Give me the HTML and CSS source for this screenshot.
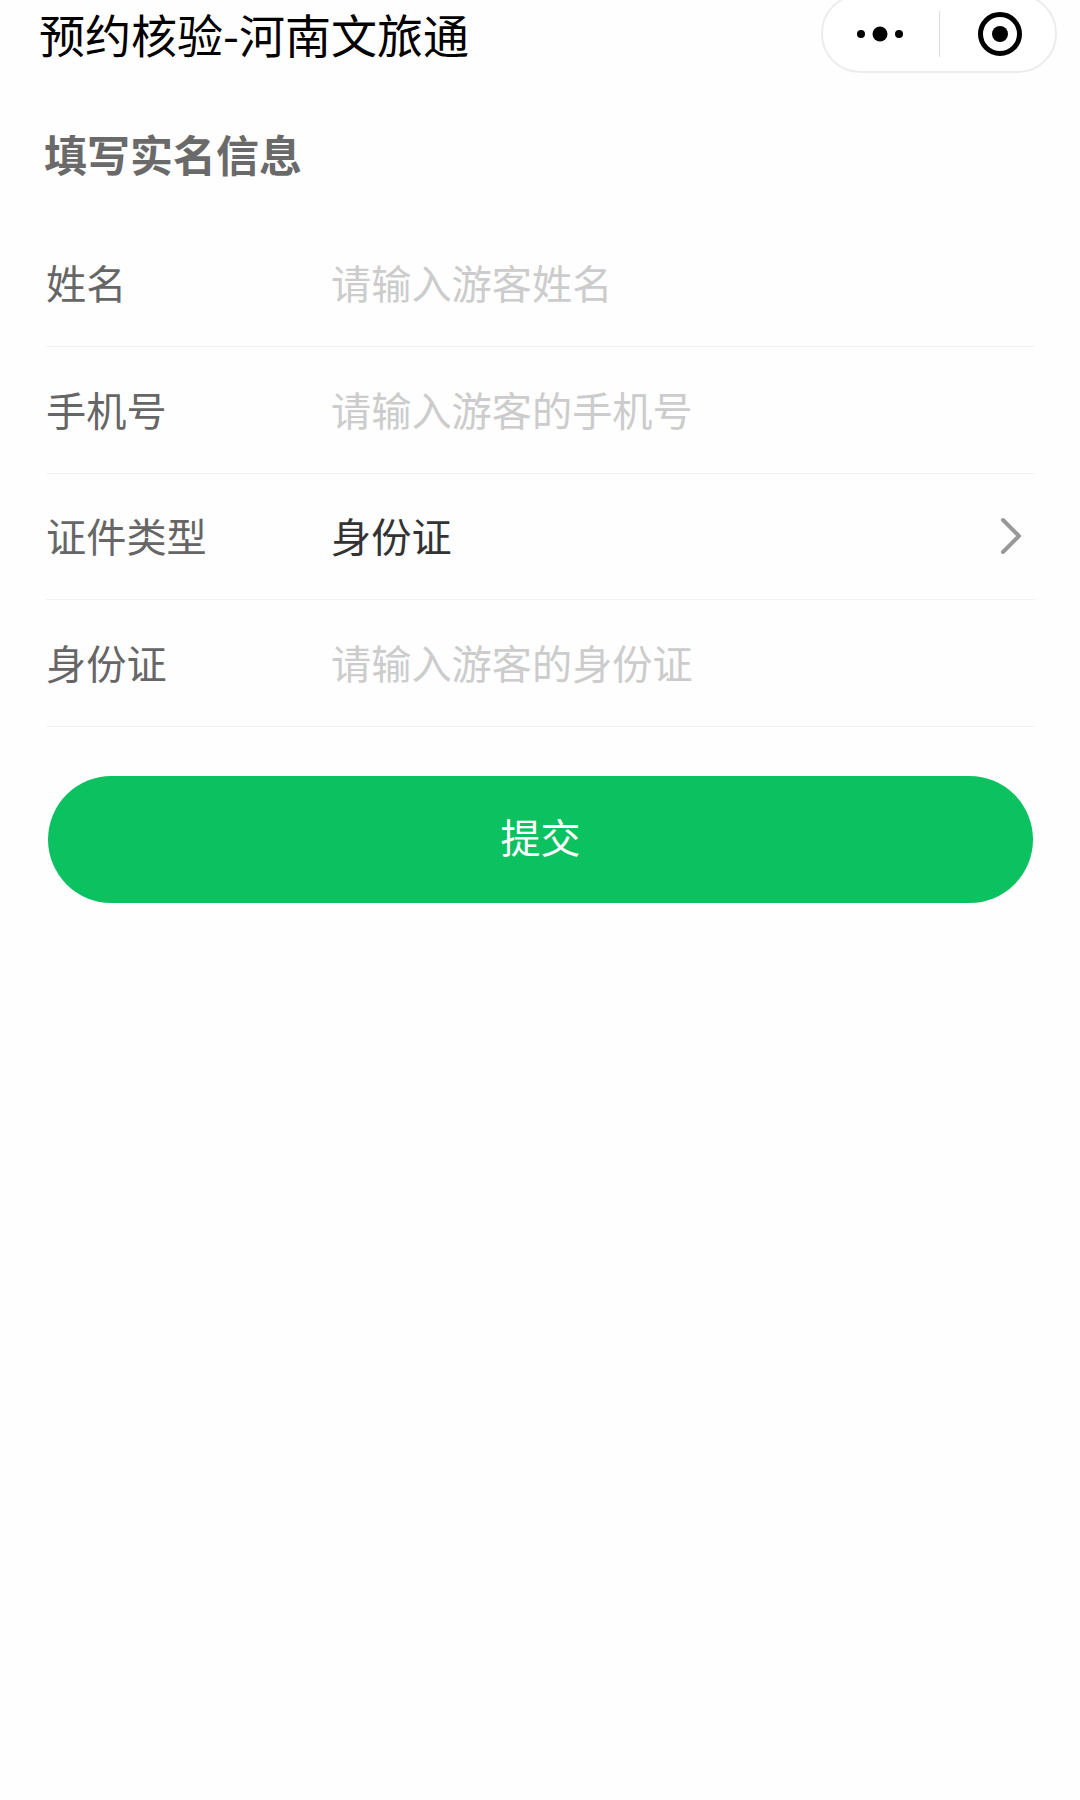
FILE: index.html
```html
<!DOCTYPE html>
<html lang="zh-CN">
<head>
    <meta charset="UTF-8">
    <meta name="viewport" content="width=device-width, initial-scale=1.0">
    <title>预约核验-河南文旅通</title>
    <link rel="stylesheet" href="styles.css">
</head>
<body>
    <header class="nav-bar">
        <h1 class="nav-title">预约核验-河南文旅通</h1>
        <div class="capsule">
            <svg class="capsule-more" width="46" height="20" viewBox="0 0 46 20">
                <circle cx="4" cy="10" r="4"></circle>
                <circle cx="23" cy="10" r="7.5"></circle>
                <circle cx="42" cy="10" r="4"></circle>
            </svg>
            <span class="capsule-line"></span>
            <svg class="capsule-close" width="44" height="44" viewBox="0 0 44 44">
                <circle class="ring" cx="22" cy="22" r="19.5"></circle>
                <circle cx="22" cy="22" r="8"></circle>
            </svg>
        </div>
    </header>

    <main class="page">
        <h2 class="section-title">填写实名信息</h2>
        <form class="form">
            <div class="form-row">
                <label class="form-label" for="name">姓名</label>
                <input class="form-input" type="text" id="name" placeholder="请输入游客姓名">
            </div>
            <div class="form-row">
                <label class="form-label" for="phone">手机号</label>
                <input class="form-input" type="text" id="phone" placeholder="请输入游客的手机号">
            </div>
            <div class="form-row">
                <span class="form-label">证件类型</span>
                <span class="form-value">身份证</span>
                <svg class="arrow" width="24" height="38" viewBox="0 0 24 38">
                    <path d="M4 3 L20 19 L4 35"></path>
                </svg>
            </div>
            <div class="form-row">
                <label class="form-label" for="idcard">身份证</label>
                <input class="form-input" type="text" id="idcard" placeholder="请输入游客的身份证">
            </div>
            <button class="submit-btn" type="button">提交</button>
        </form>
    </main>
</body>
</html>
```

FILE: styles.css
```css
body {
    margin: 0;
    height: 1800px;
    background-color: #fefefe;
    font-family: "Noto Sans CJK SC", "Noto Sans", sans-serif;
    overflow: hidden;
}

.nav-bar {
    position: relative;
    height: 72px;
    padding-left: 39px;
}

.nav-title {
    margin: 0;
    font-size: 46px;
    font-weight: 400;
    line-height: 66px;
    color: #000;
}

.capsule {
    position: absolute;
    top: -6px;
    left: 821px;
    width: 236px;
    height: 79px;
    box-sizing: border-box;
    border: 2px solid #ececec;
    border-radius: 39px;
    display: flex;
    align-items: center;
    background-color: #fff;
}

.capsule-more {
    margin-left: 34px;
    fill: #000;
}

.capsule-line {
    width: 1px;
    height: 46px;
    margin-left: 36px;
    background-color: #ddd;
}

.capsule-close {
    margin-left: 38px;
    fill: #000;
}

.capsule-close .ring {
    fill: none;
    stroke: #000;
    stroke-width: 5;
}

.page {
    padding: 0 45px 0 46px;
}

.section-title {
    margin: 51px 0 0 -2px;
    font-size: 43px;
    font-weight: 700;
    line-height: 60px;
    color: #6a6a6a;
}

.form {
    margin-top: 37px;
}

.form-row {
    display: flex;
    align-items: center;
    height: 122.8px;
    padding-bottom: 3px;
    border-bottom: 1px solid #f2f2f2;
}

.form-label {
    width: 285px;
    flex-shrink: 0;
    font-size: 40.2px;
    color: #666;
}

.form-input {
    flex: 1;
    min-width: 0;
    padding: 0;
    border: none;
    outline: none;
    background: transparent;
    font-family: inherit;
    font-size: 40.2px;
    color: #333;
}

.form-input::placeholder {
    color: #ccc;
    opacity: 1;
}

.form-value {
    flex: 1;
    font-size: 40.2px;
    color: #333;
}

.arrow {
    margin: 3px 12px 0 0;
    fill: none;
    stroke: #999;
    stroke-width: 4;
    stroke-linecap: round;
    stroke-linejoin: round;
}

.submit-btn {
    display: block;
    width: 985px;
    height: 127px;
    margin: 48.6px 0 0 2px;
    padding: 0 0 7px;
    border: none;
    border-radius: 64px;
    background-color: #0bc160;
    color: #fff;
    font-family: inherit;
    font-size: 40px;
}
```
